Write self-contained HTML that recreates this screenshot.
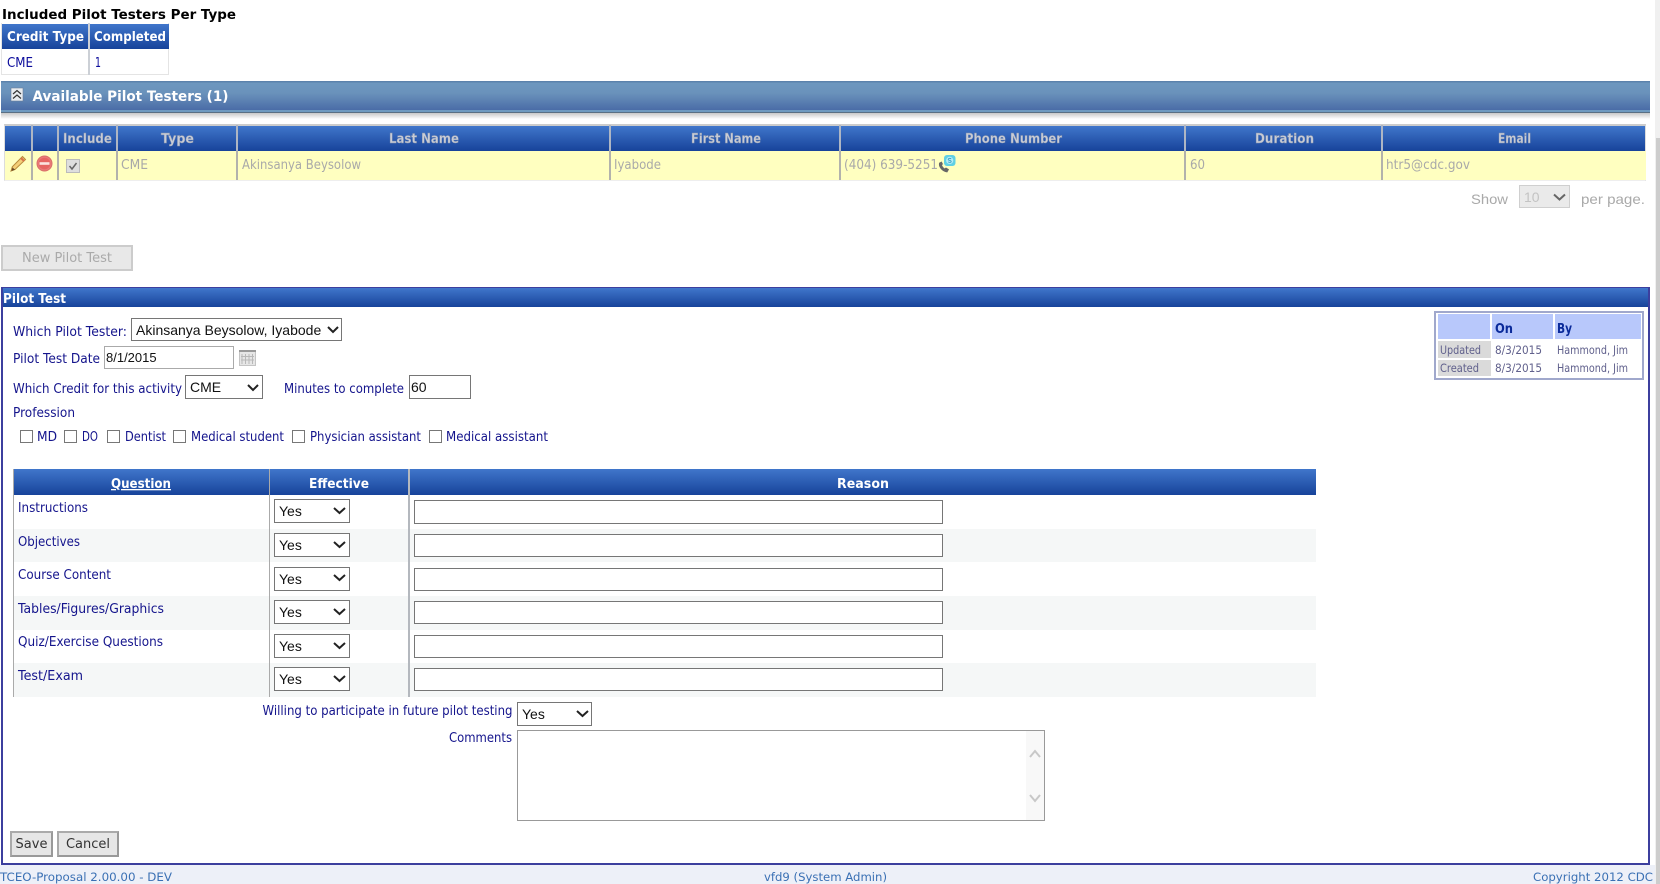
<!DOCTYPE html>
<html>
<head>
<meta charset="utf-8">
<title>Pilot Test</title>
<style>
html,body{margin:0;padding:0;width:1660px;height:884px;overflow:hidden;background:#fff}
.a{position:absolute;box-sizing:border-box}
.hd{background:linear-gradient(#4076cb,#17439a)}
.v{position:absolute;width:2px;background:linear-gradient(#aeb6c4 0,#aeb6c4 26px,#b2b2ac 26px)}
select,input,textarea,button{position:absolute;box-sizing:border-box;margin:0;border-radius:0;outline:none}
select{appearance:none;-webkit-appearance:none;background:#fff;border:1px solid #767676;font:14px "Liberation Sans",sans-serif;color:#111;padding:0 0 0 4px}
input[type=text]{background:#fff;border:1px solid #767676;font:13px "Liberation Sans",sans-serif;color:#111;padding:0 0 0 1px}
input[type=checkbox]{appearance:none;-webkit-appearance:none;background:#fff;border:1px solid #777;width:13px;height:13px}
textarea{border:1px solid #999;background:#fff;resize:none;overflow:hidden}
button{font:13px "DejaVu Sans",sans-serif;padding:0}
svg.o{position:absolute;left:0;top:0;pointer-events:none}
svg text{font-family:"DejaVu Sans",sans-serif;font-size:13px;fill:#14148c;white-space:pre}
svg .w{fill:#fff;font-weight:bold}
svg .g{fill:#a9a9a9}
svg .gh{fill:#c8ccd6;font-weight:bold;stroke:#8593ae;stroke-width:.4px}
svg .s{font-size:11.5px;fill:#60608c}
svg .f{font-size:11.5px;fill:#3a70b4}
svg .ar{font-family:"Liberation Sans",sans-serif;font-size:14px;fill:#a9a9a9}
</style>
</head>
<body>

<!-- scrollbar -->
<div class="a" style="left:1655px;top:0;width:5px;height:884px;background:#f0f0f0"></div>
<div class="a" style="left:1656px;top:138px;width:4px;height:746px;background:#cdcdcd"></div>

<!-- small table -->
<div class="a" style="left:1px;top:23px;width:168px;height:52px;border:1px solid #e4e4e4;border-top:0"></div>
<div class="a hd" style="left:2px;top:24px;width:167px;height:25px"></div>
<div class="a" style="left:88px;top:23px;width:2px;height:52px;background:#ccd0d6"></div>

<!-- bar -->
<div class="a" style="left:1px;top:81px;width:1649px;height:32px;background:linear-gradient(#5b82ac 0,#5b82ac 1px,#6d97bf 2px,#6a92bb 12px,#4a6ca7 29px,#6f9ac0 29px,#6f9ac0 31px,#5a7084 31px)"></div>
<div class="a" style="left:1px;top:113px;width:1649px;height:6px;background:linear-gradient(#c8c8c8,#fff)"></div>

<!-- grid -->
<div class="a" style="left:4px;top:124px;width:1642px;height:57px;border:1px solid #dcdcdc;border-top:2px solid #ccc;border-bottom:1px solid #eee"></div>
<div class="a hd" style="left:5px;top:126px;width:1640px;height:25px"></div>
<div class="a" style="left:5px;top:151px;width:1641px;height:29px;background:#ffffc0"></div>
<div class="v" style="left:31px;top:125px;height:55px"></div>
<div class="v" style="left:57px;top:125px;height:55px"></div>
<div class="v" style="left:116px;top:125px;height:55px"></div>
<div class="v" style="left:236px;top:125px;height:55px"></div>
<div class="v" style="left:609px;top:125px;height:55px"></div>
<div class="v" style="left:839px;top:125px;height:55px"></div>
<div class="v" style="left:1184px;top:125px;height:55px"></div>
<div class="v" style="left:1381px;top:125px;height:55px"></div>

<!-- show -->
<select disabled style="left:1519px;top:185px;width:51px;height:23px;background:#e2e2e2;border:1px solid #bbb;color:#aaa"><option>10</option></select>

<!-- new pilot test -->
<button disabled style="left:1px;top:245px;width:132px;height:26px;background:#e8e8e8;border:2px solid #ccc;color:#aaa">New Pilot Test</button>

<!-- panel -->
<div class="a" style="left:1px;top:287px;width:1649px;height:578px;border:2px solid #3c3f9e;border-top-width:1px;border-bottom-color:#3c3f9e"></div>
<div class="a hd" style="left:3px;top:288px;width:1645px;height:19px"></div>

<!-- updated table -->
<div class="a" style="left:1434px;top:311px;width:210px;height:69px;border:2px solid #a0a8cc;background:#fff"></div>
<div class="a" style="left:1438px;top:314px;width:52px;height:25px;background:#b8c8fb"></div>
<div class="a" style="left:1492px;top:314px;width:61px;height:25px;background:#b8c8fb"></div>
<div class="a" style="left:1555px;top:314px;width:86px;height:25px;background:#b8c8fb"></div>
<div class="a" style="left:1438px;top:341px;width:53px;height:17px;background:#dadada"></div>
<div class="a" style="left:1438px;top:360px;width:53px;height:16px;background:#dadada"></div>

<!-- form controls -->
<select style="left:131px;top:318px;width:211px;height:23px"><option>Akinsanya Beysolow, Iyabode</option></select>
<input type="text" value="8/1/2015" style="left:104px;top:346px;width:130px;height:23px;border-color:#aaa">
<select style="left:185px;top:375px;width:78px;height:24px"><option>CME</option></select>
<input type="text" value="60" style="left:409px;top:375px;width:62px;height:24px;font-size:14px">

<input type="checkbox" style="left:20px;top:430px">
<input type="checkbox" style="left:64px;top:430px">
<input type="checkbox" style="left:107px;top:430px">
<input type="checkbox" style="left:173px;top:430px">
<input type="checkbox" style="left:292px;top:430px">
<input type="checkbox" style="left:429px;top:430px">

<!-- question table -->
<div class="a hd" style="left:13px;top:469px;width:1303px;height:26px"></div>
<div class="a" style="left:13px;top:529px;width:1303px;height:33px;background:#f5f7f7"></div>
<div class="a" style="left:13px;top:596px;width:1303px;height:34px;background:#f5f7f7"></div>
<div class="a" style="left:13px;top:663px;width:1303px;height:34px;background:#f5f7f7"></div>
<div class="a" style="left:13px;top:469px;width:1px;height:228px;background:#aaa"></div>
<div class="a" style="left:269px;top:469px;width:1px;height:228px;background:#aaa"></div>
<div class="a" style="left:408px;top:469px;width:2px;height:228px;background:#b4b8be"></div>

<select style="left:274px;top:499px;width:76px;height:24px"><option>Yes</option></select>
<select style="left:274px;top:533px;width:76px;height:24px"><option>Yes</option></select>
<select style="left:274px;top:567px;width:76px;height:24px"><option>Yes</option></select>
<select style="left:274px;top:600px;width:76px;height:24px"><option>Yes</option></select>
<select style="left:274px;top:634px;width:76px;height:24px"><option>Yes</option></select>
<select style="left:274px;top:667px;width:76px;height:24px"><option>Yes</option></select>

<input type="text" style="left:414px;top:500px;width:529px;height:24px">
<input type="text" style="left:414px;top:534px;width:529px;height:23px">
<input type="text" style="left:414px;top:568px;width:529px;height:23px">
<input type="text" style="left:414px;top:601px;width:529px;height:23px">
<input type="text" style="left:414px;top:635px;width:529px;height:23px">
<input type="text" style="left:414px;top:668px;width:529px;height:23px">

<select style="left:517px;top:702px;width:75px;height:24px"><option>Yes</option></select>
<textarea style="left:517px;top:730px;width:528px;height:91px"></textarea>
<div class="a" style="left:1026px;top:731px;width:18px;height:89px;background:#f8f8f8"></div>

<button style="left:10px;top:831px;width:43px;height:26px;background:#e6e6e6;border:2px solid;border-color:#aaa #999 #999 #aaa;color:#333">Save</button>
<button style="left:57px;top:831px;width:62px;height:26px;background:#e6e6e6;border:2px solid;border-color:#aaa #999 #999 #aaa;color:#333">Cancel</button>

<!-- footer -->
<div class="a" style="left:0;top:865px;width:1655px;height:19px;background:#edf0f8"></div>

<svg class="o" width="1660" height="884" viewBox="0 0 1660 884">
  <text x="2" y="19" textLength="234" lengthAdjust="spacingAndGlyphs" style="font-weight:bold;fill:#000">Included Pilot Testers Per Type</text>
  <text class="w" x="7" y="41" textLength="77" lengthAdjust="spacingAndGlyphs">Credit Type</text>
  <text class="w" x="94" y="41" textLength="72" lengthAdjust="spacingAndGlyphs">Completed</text>
  <text x="7" y="67" textLength="26" lengthAdjust="spacingAndGlyphs" style="fill:#0c0c9c">CME</text>
  <text x="95" y="67" textLength="6" lengthAdjust="spacingAndGlyphs" style="fill:#0c0c9c">1</text>

  <!-- collapse icon -->
  <rect x="11" y="88" width="12" height="13" fill="#e8ecf0" stroke="#6a7f9a" stroke-width=".6"/>
  <path d="M13 94l4-3.5 4 3.5M13 98.5l4-3.5 4 3.5" fill="none" stroke="#333" stroke-width="1.2"/>
  <text class="w" x="32.5" y="101" textLength="196" lengthAdjust="spacingAndGlyphs" style="font-size:14px">Available Pilot Testers (1)</text>

  <text class="gh" x="63" y="143" textLength="49" lengthAdjust="spacingAndGlyphs">Include</text>
  <text class="gh" x="161" y="143" textLength="33" lengthAdjust="spacingAndGlyphs">Type</text>
  <text class="gh" x="389" y="143" textLength="70" lengthAdjust="spacingAndGlyphs">Last Name</text>
  <text class="gh" x="691" y="143" textLength="70" lengthAdjust="spacingAndGlyphs">First Name</text>
  <text class="gh" x="965" y="143" textLength="97" lengthAdjust="spacingAndGlyphs">Phone Number</text>
  <text class="gh" x="1255" y="143" textLength="59" lengthAdjust="spacingAndGlyphs">Duration</text>
  <text class="gh" x="1498" y="143" textLength="33" lengthAdjust="spacingAndGlyphs">Email</text>

  <!-- pencil -->
  <path d="M22.500 156.500l3 3-10.500 10-4 1.500 1.300-4.200z" fill="#f4cf78" stroke="#b88a3a" stroke-width="1"/>
  <path d="M21 158l3 3" stroke="#d9744a" stroke-width="2"/>
  <path d="M11.500 171l1-3.500 2.600 2.300z" fill="#6a4a2a"/>
  <!-- minus -->
  <circle cx="44.500" cy="163.500" r="7.500" fill="#ea7a78" stroke="#d8706a" stroke-width="1"/>
  <circle cx="44.500" cy="163.500" r="5.800" fill="#e66562"/>
  <rect x="39.500" y="162.200" width="10" height="2.600" fill="#fbe4e0"/>
  <!-- checkbox -->
  <rect x="66.500" y="159.500" width="13" height="13" fill="#dedede" stroke="#bbb"/>
  <path d="M69.500 166l2.500 3 4.500-6" fill="none" stroke="#666" stroke-width="1.500"/>

  <text class="g" x="121" y="169" textLength="27" lengthAdjust="spacingAndGlyphs">CME</text>
  <text class="g" x="242" y="169" textLength="119" lengthAdjust="spacingAndGlyphs">Akinsanya Beysolow</text>
  <text class="g" x="614" y="169" textLength="47" lengthAdjust="spacingAndGlyphs">Iyabode</text>
  <text class="g" x="844" y="169" textLength="94" lengthAdjust="spacingAndGlyphs">(404) 639-5251</text>
  <text class="g" x="1190" y="169" textLength="15" lengthAdjust="spacingAndGlyphs">60</text>
  <text class="g" x="1386" y="169" textLength="84" lengthAdjust="spacingAndGlyphs">htr5@cdc.gov</text>

  <!-- phone / skype -->
  <path d="M939.500 163c-1 3 2 8 7.500 9l1.500-2.500-2.500-1.500-1.500 1c-1.500-1-2.500-2.500-3-4l1-1-1-2z" fill="#666" stroke="#666" stroke-width=".8"/>
  <rect x="944" y="155" width="11.500" height="11" rx="3" fill="#5fd0e4"/>
  <circle cx="949.700" cy="160.400" r="3.600" fill="#b4ecf6"/>
  <path d="M951.200 158.800c-1.500-.8-3-.4-3 .6 0 1.400 3 .8 3 2.100 0 1-1.700 1.200-3 .4" fill="none" stroke="#3aa0c4" stroke-width=".9"/>

  <text class="ar" x="1471" y="204" textLength="37" lengthAdjust="spacingAndGlyphs">Show</text>
  <path d="M1554 194.500l5.500 5 5.500-5" fill="none" stroke="#666" stroke-width="2"/>
  <text class="ar" x="1581" y="204" textLength="64" lengthAdjust="spacingAndGlyphs">per page.</text>

  <text class="w" x="3" y="303" textLength="63" lengthAdjust="spacingAndGlyphs">Pilot Test</text>

  <text x="1495" y="333" textLength="18" lengthAdjust="spacingAndGlyphs" style="font-weight:bold;fill:#0a2a9a">On</text>
  <text x="1557" y="333" textLength="15" lengthAdjust="spacingAndGlyphs" style="font-weight:bold;fill:#0a2a9a">By</text>
  <text class="s" x="1440" y="354" textLength="41" lengthAdjust="spacingAndGlyphs">Updated</text>
  <text class="s" x="1495" y="354" textLength="47" lengthAdjust="spacingAndGlyphs">8/3/2015</text>
  <text class="s" x="1557" y="354" textLength="71" lengthAdjust="spacingAndGlyphs">Hammond, Jim</text>
  <text class="s" x="1440" y="372" textLength="39" lengthAdjust="spacingAndGlyphs">Created</text>
  <text class="s" x="1495" y="372" textLength="47" lengthAdjust="spacingAndGlyphs">8/3/2015</text>
  <text class="s" x="1557" y="372" textLength="71" lengthAdjust="spacingAndGlyphs">Hammond, Jim</text>

  <text x="13" y="336" textLength="114" lengthAdjust="spacingAndGlyphs">Which Pilot Tester:</text>
  <path d="M328 327l5 5 5-5" fill="none" stroke="#222" stroke-width="2"/>
  <text x="13" y="363" textLength="87" lengthAdjust="spacingAndGlyphs">Pilot Test Date</text>

  <!-- calendar -->
  <rect x="239.500" y="350.500" width="16" height="15" fill="#e6e6e6" stroke="#c4c4c4"/>
  <rect x="239" y="350" width="17" height="2" fill="#999"/>
  <path d="M242 354v10M245.500 354v10M249 354v10M252.500 354v10M241 356.500h13M241 360h13" stroke="#b8b8b8" stroke-width="1"/>

  <text x="13" y="393" textLength="169" lengthAdjust="spacingAndGlyphs">Which Credit for this activity</text>
  <path d="M248 385l5 5 5-5" fill="none" stroke="#222" stroke-width="2"/>
  <text x="284" y="393" textLength="120" lengthAdjust="spacingAndGlyphs">Minutes to complete</text>
  <text x="13" y="417" textLength="62" lengthAdjust="spacingAndGlyphs">Profession</text>

  <text x="37" y="441" textLength="20" lengthAdjust="spacingAndGlyphs">MD</text>
  <text x="82" y="441" textLength="16" lengthAdjust="spacingAndGlyphs">DO</text>
  <text x="125" y="441" textLength="41" lengthAdjust="spacingAndGlyphs">Dentist</text>
  <text x="191" y="441" textLength="93" lengthAdjust="spacingAndGlyphs">Medical student</text>
  <text x="310" y="441" textLength="111" lengthAdjust="spacingAndGlyphs">Physician assistant</text>
  <text x="446" y="441" textLength="102" lengthAdjust="spacingAndGlyphs">Medical assistant</text>

  <text class="w" x="111" y="488" textLength="60" lengthAdjust="spacingAndGlyphs" text-decoration="underline">Question</text>
  <text class="w" x="309" y="488" textLength="60" lengthAdjust="spacingAndGlyphs">Effective</text>
  <text class="w" x="837" y="488" textLength="52" lengthAdjust="spacingAndGlyphs">Reason</text>

  <text x="18" y="512" textLength="70" lengthAdjust="spacingAndGlyphs">Instructions</text>
  <text x="18" y="546" textLength="62" lengthAdjust="spacingAndGlyphs">Objectives</text>
  <text x="18" y="579" textLength="93" lengthAdjust="spacingAndGlyphs">Course Content</text>
  <text x="18" y="613" textLength="146" lengthAdjust="spacingAndGlyphs">Tables/Figures/Graphics</text>
  <text x="18" y="646" textLength="145" lengthAdjust="spacingAndGlyphs">Quiz/Exercise Questions</text>
  <text x="18" y="680" textLength="65" lengthAdjust="spacingAndGlyphs">Test/Exam</text>

  <path d="M334 508l5.500 5 5.500-5M334 542l5.500 5 5.500-5M334 575l5.500 5 5.500-5M334 609l5.500 5 5.500-5M334 643l5.500 5 5.500-5M334 676l5.500 5 5.500-5" fill="none" stroke="#222" stroke-width="2"/>
  <path d="M577 711l5.500 5 5.500-5" fill="none" stroke="#222" stroke-width="2"/>

  <text x="262.500" y="715" textLength="250" lengthAdjust="spacingAndGlyphs">Willing to participate in future pilot testing</text>
  <text x="449" y="742" textLength="63" lengthAdjust="spacingAndGlyphs">Comments</text>

  <path d="M1030 757l5-6 5 6M1030 795l5 6 5-6" fill="none" stroke="#c8c8c8" stroke-width="2"/>

  <text class="f" x="0" y="881" textLength="172" lengthAdjust="spacingAndGlyphs">TCEO-Proposal 2.00.00 - DEV</text>
  <text class="f" x="764" y="881" textLength="123" lengthAdjust="spacingAndGlyphs">vfd9 (System Admin)</text>
  <text class="f" x="1533" y="881" textLength="120" lengthAdjust="spacingAndGlyphs">Copyright 2012 CDC</text>
</svg>
</body>
</html>
